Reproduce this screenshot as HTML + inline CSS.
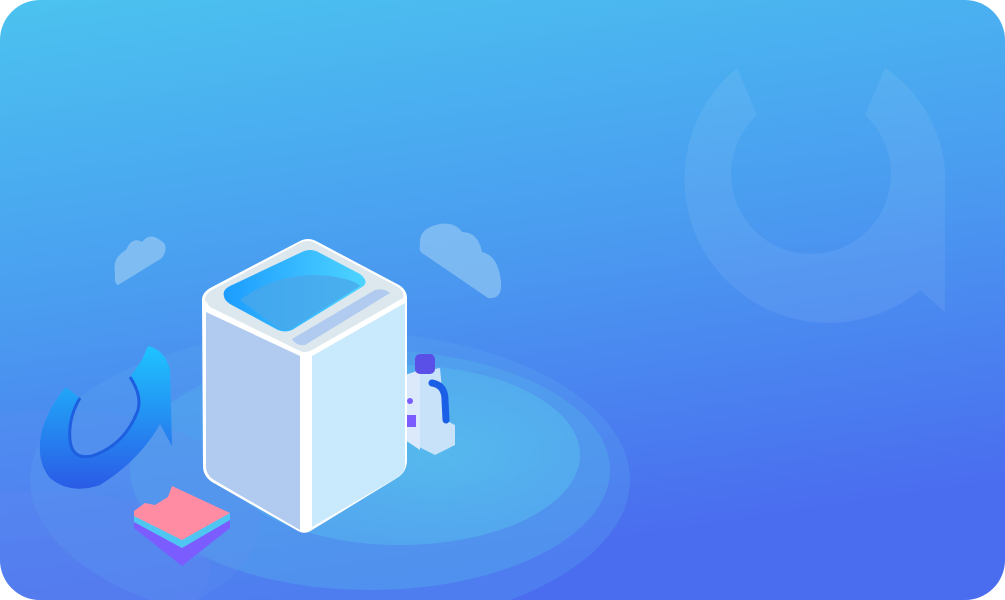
<!DOCTYPE html>
<html><head><style>
html,body{margin:0;padding:0;background:#fff;overflow:hidden;width:1005px;height:600px;}
svg{display:block}
</style></head><body>
<svg width="1005" height="600" viewBox="0 0 1005 600" xmlns="http://www.w3.org/2000/svg">
<defs>
<linearGradient id="bg" x1="0" y1="0" x2="0.25" y2="1">
<stop offset="0" stop-color="#4bc3ef"/>
<stop offset="0.5" stop-color="#4a9cf0"/>
<stop offset="1" stop-color="#4a6cef"/>
</linearGradient>
<radialGradient id="rg" cx="0.6" cy="0.5" r="0.5">
<stop offset="0" stop-color="#5ad2ec"/>
<stop offset="1" stop-color="#55b6ee"/>
</radialGradient>
<linearGradient id="arr" x1="0" y1="0" x2="0" y2="1">
<stop offset="0" stop-color="#1ec4ff"/>
<stop offset="1" stop-color="#2a5be6"/>
</linearGradient>
<linearGradient id="tub" x1="0" y1="0" x2="1" y2="0">
<stop offset="0" stop-color="#1c9cff"/>
<stop offset="1" stop-color="#4ed4ff"/>
</linearGradient>
<clipPath id="c"><rect width="1005" height="600" rx="40"/></clipPath>
</defs>
<g clip-path="url(#c)">
<rect width="1005" height="600" fill="url(#bg)"/>
<path d="M737 68 A137 137 0 1 0 920 290 L945 312 L945 170 A137 137 0 0 0 885 68 L865 115 A80 80 0 1 1 757 115 Z" fill="#fff" opacity="0.07"/>
<ellipse cx="330" cy="480" rx="300" ry="150" fill="#5aa6ee" opacity="0.3"/>
<ellipse cx="370" cy="470" rx="240" ry="120" fill="#57b4ed" opacity="0.35"/>
<ellipse cx="400" cy="455" rx="180" ry="90" fill="url(#rg)" opacity="0.55"/>
<ellipse cx="60" cy="520" rx="200" ry="110" fill="#6090ef" opacity="0.25"/>
<ellipse cx="40" cy="570" rx="170" ry="80" fill="#6288ef" opacity="0.25"/>
<path d="M118 285 L162 258 Q170 245 160 240 Q150 232 142 242 Q132 236 126 250 Q112 258 115 272 Q114 284 118 285Z" fill="#8cc3f3" opacity="0.8"/>
<path d="M425 255 L488 298 Q505 300 500 275 Q496 255 482 252 Q478 232 462 232 Q455 222 440 224 Q418 228 420 245 Q418 252 425 255Z" fill="#8cc3f3" opacity="0.75"/>
<path d="M66,387 L80,398 Q68,418 70,440 Q72,460 92,456 Q125,445 138,410 Q142,395 130,377 L142,360 L148,346 Q165,350 170,370 L172,446 L160,424 Q140,460 100,485 Q70,495 50,478 Q35,460 42,430 Q50,405 66,387Z" fill="url(#arr)"/>
<path d="M80,398 Q68,418 70,440 Q72,460 92,456 Q125,445 138,410 Q142,395 130,377" fill="none" stroke="#1d5fe0" stroke-width="3"/>
<polygon points="134,517 182,542 230,518 230,528 182,566 134,528" fill="#7a5cff"/>
<polygon points="134,513 182,538 230,513 230,520 182,548 134,522" fill="#4fc6f2"/>
<polygon points="134,511 145,503 155,505 168,497 172,486 230,513 182,540 134,516" fill="#ff8ca3"/>
<polygon points="405,375 440,368 445,420 455,425 455,445 435,455 405,440" fill="#c8e2f9"/>
<polygon points="405,375 420,370 420,450 405,440" fill="#dbe9fb"/>
<rect x="415" y="354" width="20" height="20" rx="5" fill="#5a4fe6"/>
<path d="M432 383 Q445 385 445 400 L446 420" stroke="#1a5fe6" stroke-width="7" fill="none" stroke-linecap="round"/>
<circle cx="410" cy="401" r="3" fill="#7a5cff"/>
<rect x="406" y="415" width="10" height="12" fill="#7a5cff"/>
<path d="M202 300 Q202 292 212 287 L300 241 Q308 237 316 241 L399 285 Q407 290 407 298 L407 460 Q407 472 397 478 L312 530 Q305 535 298 531 L212 482 Q203 476 203 466 Z" fill="#fff"/>
<path d="M206 312 L300 356 L300 530 L214 480 Q206 475 206 466 Z" fill="#b0cbef"/>
<path d="M312 356 L405 303 L405 465 Q405 472 398 477 L312 527 Z" fill="#c9e9fc"/>
<path d="M205 300 Q205 294 212 290 L300 243 Q308 239 315 243 L398 287 Q405 292 403 298 L312 350 Q305 354 298 350 L210 307 Z" fill="#dce8ee"/>
<path d="M224 296 Q222 290 230 286 L302 252 Q310 248 318 252 L360 274 Q370 282 362 287 L292 330 Q285 333 278 330 L230 304 Q224 300 224 296Z" fill="url(#tub)"/>
<path d="M240 300 Q280 270 330 276 Q355 280 360 286 L292 328 Q285 332 278 328Z" fill="#4aa8ea" opacity="0.8"/>
<path d="M292 339 L375 290 Q385 288 390 293 L305 345 Q296 346 292 339Z" fill="#b0cbef"/>
</g>
</svg>
</body></html>
